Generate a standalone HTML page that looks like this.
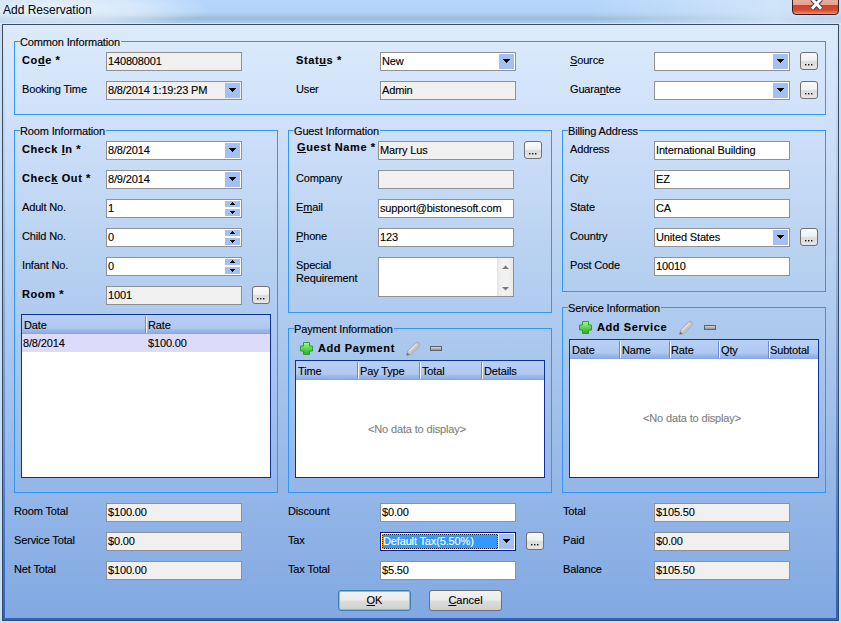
<!DOCTYPE html>
<html><head><meta charset="utf-8">
<style>
*{box-sizing:border-box}
html,body{margin:0;padding:0}
body{-webkit-text-stroke-width:0.12px;width:841px;height:623px;overflow:hidden;position:relative;background:#c9def4;font-family:"Liberation Sans",sans-serif}
.a{position:absolute}
.t{position:absolute;font-size:11px;line-height:13px;letter-spacing:-0.15px;color:#000;white-space:nowrap}
.b{font-weight:bold;letter-spacing:0.6px}
.u{text-decoration:underline}
.tb{position:absolute;width:136px;height:19px;border:1px solid #8f9194;background:#fff}
.gr{background:#f0f0f0}
.tb .v{position:absolute;left:1px;top:2px;font-size:11px;line-height:13px;letter-spacing:-0.15px;white-space:nowrap}
.dd{position:absolute;right:1px;top:1px;width:15px;height:15px;background:#a2c0f1}
.dd:after{content:"";position:absolute;left:4px;top:5px;width:7px;height:4px;background:linear-gradient(#000,#000) 0 0/7px 1px no-repeat,linear-gradient(#000,#000) 1px 1px/5px 1px no-repeat,linear-gradient(#000,#000) 2px 2px/3px 1px no-repeat,linear-gradient(#000,#000) 3px 3px/1px 1px no-repeat}
.su{position:absolute;right:1px;top:1px;width:15px;height:6px;background:#a2c0f1}
.su:after{content:"";position:absolute;left:5px;top:1px;width:5px;height:3px;background:linear-gradient(#000,#000) 2px 0/1px 1px no-repeat,linear-gradient(#000,#000) 1px 1px/3px 1px no-repeat,linear-gradient(#000,#000) 0 2px/5px 1px no-repeat}
.sd{position:absolute;right:1px;top:9px;width:15px;height:7px;background:#a2c0f1}
.sd:after{content:"";position:absolute;left:5px;top:2px;width:5px;height:3px;background:linear-gradient(#000,#000) 0 0/5px 1px no-repeat,linear-gradient(#000,#000) 1px 1px/3px 1px no-repeat,linear-gradient(#000,#000) 2px 2px/1px 1px no-repeat}
.eb{position:absolute;width:18px;height:18px;border:1px solid #707070;border-radius:3px;background:linear-gradient(#fbfbfb,#f0f0f0 45%,#dcdcdc 55%,#e6e6e6)}
.eb:after{content:"";position:absolute;left:4px;top:11px;width:1px;height:1px;background:#111;box-shadow:1px 0 0 rgba(0,0,0,.35),0px 1px 0 rgba(0,0,0,.35),1px 1px 0 rgba(0,0,0,.2),3px 0 0 #111,4px 0 0 rgba(0,0,0,.35),3px 1px 0 rgba(0,0,0,.35),4px 1px 0 rgba(0,0,0,.2),6px 0 0 #111,7px 0 0 rgba(0,0,0,.35),6px 1px 0 rgba(0,0,0,.35),7px 1px 0 rgba(0,0,0,.2)}
.g{position:absolute;border:1px solid #3097f7;border-top:none}
.gt{position:absolute;left:-1px;right:-1px;top:0;height:1px;display:flex}
.gt i{display:block;height:1px;background:#3097f7}
.gt i.f{flex:1}
.gt span{position:relative;top:-5px;font-size:11px;line-height:13px;letter-spacing:-0.15px;padding:0 1px 0 0;white-space:nowrap;color:#000;height:13px}
.grid{position:absolute;border:1px solid #0d3196;background:#fff}
.gh{position:absolute;left:0;right:0;top:0;height:19px;background:linear-gradient(#b8d0f5,#afc8f1 70%,#9db9eb 78%,#91afe6 94%,#7f9fdf)}
.gc{position:absolute;top:0;height:19px}
.gs{position:absolute;top:1px;width:2px;height:17px;border-left:1px solid #6a8ad0;border-right:1px solid #eef4ff}
.nd{position:absolute;font-size:11px;line-height:13px;color:#808080;white-space:nowrap;letter-spacing:-0.15px}
.plus{position:absolute;width:14px;height:14px}
.btn{position:absolute;width:73px;height:21px;border:1px solid #707070;border-radius:3px;background:linear-gradient(#f2f2f2,#ebebeb 48%,#dddddd 52%,#cfcfcf);font-size:11px;line-height:13px;text-align:center}
</style></head><body>
<!-- title bar -->
<div class="a" style="left:0;top:0;width:841px;height:25px;background:radial-gradient(ellipse 150px 22px at 60px 9px,rgba(236,244,252,0.95),rgba(236,244,252,0.6) 55%,rgba(236,244,252,0) 100%),linear-gradient(90deg,rgba(215,232,250,0) 70%,rgba(215,232,250,0.8) 92%,rgba(215,232,250,0.5)),linear-gradient(#b6d7fb,#b2d3f7 45%,#a9c9ec 62%,#9dbad6 74%,#a3c5e8 84%,#a8cbee 90%,#e4f1fc 96%)"></div>
<div class="a" style="left:3px;top:3px;-webkit-text-stroke-width:0;font-size:12px;line-height:15px;color:#000;white-space:nowrap">Add Reservation</div>
<div class="a" style="left:792px;top:-3px;width:47px;height:18px;border:1px solid #3c1c1c;border-radius:0 0 4px 4px;background:linear-gradient(#eab4a6,#e6a090 42%,#cc4428 46%,#d24a30 75%,#e07858 92%,#e89a80)"></div>
<svg class="a" style="left:808px;top:0" width="17" height="12" viewBox="0 0 17 12"><path d="M4 -1 L13 8.6 M13 -1 L4 8.6" stroke="#33303a" stroke-width="4.8" fill="none"/><path d="M4 -1 L13 8.6 M13 -1 L4 8.6" stroke="#fff" stroke-width="3" fill="none"/></svg>

<!-- client frame -->
<div class="a" style="left:2px;top:24px;width:837px;height:597px;border:1px solid #3a4a60;background:linear-gradient(#dcebfb 0px,#cfe0fa 97px,#b9d2f1 225px,#a2c1eb 375px,#86ace4 562px,#82a8e2 595px)"></div>
<div class="a" style="left:3px;top:25px;width:2px;height:595px;background:linear-gradient(#dde9f8,#b0caee 150px,#8aaee0 275px,#5a8ad8 425px,#2a62cc 595px)"></div>
<div class="a" style="left:836px;top:25px;width:2px;height:595px;background:linear-gradient(#dde9f8,#b0caee 150px,#8aaee0 275px,#5a8ad8 425px,#2a62cc 595px)"></div>
<div class="a" style="left:3px;top:618px;width:835px;height:2px;background:#2a62cc"></div>

<!-- Common Information -->
<div class="g" style="left:14px;top:41px;width:812px;height:74px"><div class="gt"><i style="width:6px"></i><span>Common Information</span><i class="f"></i></div></div>
<div class="t b" style="left:22px;top:54px">Co<span class="u">d</span>e *</div>
<div class="t" style="left:22px;top:83px">Booking Time</div>
<div class="tb gr" style="left:106px;top:52px"><div class="v">140808001</div></div>
<div class="tb gr" style="left:106px;top:81px"><div class="v">8/8/2014 1:19:23 PM</div><div class="dd"></div></div>
<div class="t b" style="left:296px;top:54px">Stat<span class="u">u</span>s *</div>
<div class="t" style="left:296px;top:83px">User</div>
<div class="tb" style="left:380px;top:52px"><div class="v">New</div><div class="dd"></div></div>
<div class="tb gr" style="left:380px;top:81px"><div class="v">Admin</div></div>
<div class="t" style="left:570px;top:54px"><span class="u">S</span>ource</div>
<div class="t" style="left:570px;top:83px">Guara<span class="u">n</span>tee</div>
<div class="tb" style="left:654px;top:52px"><div class="dd"></div></div>
<div class="tb" style="left:654px;top:81px"><div class="dd"></div></div>
<div class="eb" style="left:800px;top:52px"></div>
<div class="eb" style="left:800px;top:81px"></div>

<!-- Room Information -->
<div class="g" style="left:14px;top:130px;width:264px;height:363px"><div class="gt"><i style="width:6px"></i><span>Room Information</span><i class="f"></i></div></div>
<div class="t b" style="left:22px;top:143px">Check <span class="u">I</span>n *</div>
<div class="t b" style="left:22px;top:172px">Chec<span class="u">k</span> Out *</div>
<div class="t" style="left:22px;top:201px">Adult No.</div>
<div class="t" style="left:22px;top:230px">Child No.</div>
<div class="t" style="left:22px;top:259px">Infant No.</div>
<div class="t b" style="left:22px;top:288px">Room *</div>
<div class="tb" style="left:106px;top:141px"><div class="v">8/8/2014</div><div class="dd"></div></div>
<div class="tb" style="left:106px;top:170px"><div class="v">8/9/2014</div><div class="dd"></div></div>
<div class="tb" style="left:106px;top:199px"><div class="v">1</div><div class="su"></div><div class="sd"></div></div>
<div class="tb" style="left:106px;top:228px"><div class="v">0</div><div class="su"></div><div class="sd"></div></div>
<div class="tb" style="left:106px;top:257px"><div class="v">0</div><div class="su"></div><div class="sd"></div></div>
<div class="tb gr" style="left:106px;top:286px"><div class="v">1001</div></div>
<div class="eb" style="left:252px;top:286px"></div>
<div class="grid" style="left:21px;top:314px;width:250px;height:164px">
 <div class="gh"></div>
 <div class="gs" style="left:123px"></div>
 <div class="t" style="left:2px;top:4px">Date</div>
 <div class="t" style="left:126px;top:4px">Rate</div>
 <div class="a" style="left:0;top:19px;width:248px;height:18px;background:#dcdcfa"></div>
 <div class="t" style="left:1px;top:22px">8/8/2014</div>
 <div class="t" style="left:126px;top:22px">$100.00</div>
</div>

<!-- Guest Information -->
<div class="g" style="left:288px;top:130px;width:264px;height:183px"><div class="gt"><i style="width:6px"></i><span>Guest Information</span><i class="f"></i></div></div>
<div class="t b" style="left:297px;top:141px"><span class="u">G</span>uest Name *</div>
<div class="t" style="left:296px;top:172px">Company</div>
<div class="t" style="left:296px;top:201px">E<span class="u">m</span>ail</div>
<div class="t" style="left:296px;top:230px"><span class="u">P</span>hone</div>
<div class="t" style="left:296px;top:259px">Special</div>
<div class="t" style="left:296px;top:272px">Requirement</div>
<div class="tb gr" style="left:378px;top:141px"><div class="v">Marry Lus</div></div>
<div class="eb" style="left:524px;top:141px"></div>
<div class="tb gr" style="left:378px;top:170px"></div>
<div class="tb" style="left:378px;top:199px"><div class="v">support@bistonesoft.com</div></div>
<div class="tb" style="left:378px;top:228px"><div class="v">123</div></div>
<div class="tb" style="left:378px;top:257px;height:40px"><div class="a" style="right:0;top:0;width:16px;height:38px;background:linear-gradient(90deg,#e6e6e6,#f1f1f1 30%,#f1f1f1 70%,#e9e9e9)"></div>
 <svg class="a" style="left:122px;top:6px" width="9" height="28" viewBox="0 0 9 28"><path d="M1 5 L4.5 1.5 L8 5 Z" fill="#7a7a7a"/><path d="M1 23 L4.5 26.5 L8 23 Z" fill="#7a7a7a"/></svg></div>

<!-- Billing Address -->
<div class="g" style="left:562px;top:130px;width:264px;height:162px"><div class="gt"><i style="width:6px"></i><span>Billing Address</span><i class="f"></i></div></div>
<div class="t" style="left:570px;top:143px">Address</div>
<div class="t" style="left:570px;top:172px">City</div>
<div class="t" style="left:570px;top:201px">State</div>
<div class="t" style="left:570px;top:230px">Country</div>
<div class="t" style="left:570px;top:259px">Post Code</div>
<div class="tb" style="left:654px;top:141px"><div class="v">International Building</div></div>
<div class="tb" style="left:654px;top:170px"><div class="v">EZ</div></div>
<div class="tb" style="left:654px;top:199px"><div class="v">CA</div></div>
<div class="tb" style="left:654px;top:228px"><div class="v">United States</div><div class="dd"></div></div>
<div class="eb" style="left:800px;top:228px"></div>
<div class="tb" style="left:654px;top:257px"><div class="v">10010</div></div>

<!-- Payment Information -->
<div class="g" style="left:288px;top:328px;width:264px;height:165px"><div class="gt"><i style="width:6px"></i><span>Payment Information</span><i class="f"></i></div></div>
<svg class="plus" style="left:300px;top:342px" viewBox="0 0 14 14"><defs><linearGradient id="pg" x1="0" y1="0" x2="0" y2="1"><stop offset="0" stop-color="#aef596"/><stop offset="0.5" stop-color="#62d452"/><stop offset="1" stop-color="#2aac2a"/></linearGradient></defs><path d="M3.5 .5h6v3.5h3v5h-3v3.5h-6v-3.5h-3v-5h3z" fill="url(#pg)" stroke="#29a02a"/></svg>
<div class="t b" style="left:318px;top:342px">Add Payment</div>
<svg class="a" style="left:405px;top:341px" width="16" height="16" viewBox="0 0 16 16"><path d="M1.5 14.5 L2.5 10 L10.5 2 Q12.5 0.5 14 2 Q15.5 3.5 14 5.5 L6 13.5 Z" fill="#c6c6c6" stroke="#a0a0a0" stroke-width="0.8"/><path d="M1.5 14.5 L2.2 11.5 L4.5 13.8 Z" fill="#707070"/><path d="M4 10.5 L11.5 3" stroke="#e2e2e2" stroke-width="1.2"/></svg>
<div class="a" style="left:430px;top:346px;width:12px;height:5px;border:1px solid #5c636b;background:linear-gradient(#d6d6d6,#b4b4b4 50%,#959595)"></div>
<div class="grid" style="left:295px;top:360px;width:250px;height:118px">
 <div class="gh"></div>
 <div class="gs" style="left:61px"></div><div class="gs" style="left:123px"></div><div class="gs" style="left:185px"></div>
 <div class="t" style="left:2px;top:4px">Time</div>
 <div class="t" style="left:64px;top:4px">Pay Type</div>
 <div class="t" style="left:126px;top:4px">Total</div>
 <div class="t" style="left:188px;top:4px">Details</div>
 <div class="nd" style="left:72px;top:62px">&lt;No data to display&gt;</div>
</div>

<!-- Service Information -->
<div class="g" style="left:562px;top:307px;width:264px;height:186px"><div class="gt"><i style="width:6px"></i><span>Service Information</span><i class="f"></i></div></div>
<svg class="plus" style="left:579px;top:321px" viewBox="0 0 14 14"><path d="M3.5 .5h6v3.5h3v5h-3v3.5h-6v-3.5h-3v-5h3z" fill="url(#pg)" stroke="#29a02a"/></svg>
<div class="t b" style="left:597px;top:321px">Add Service</div>
<svg class="a" style="left:678px;top:320px" width="16" height="16" viewBox="0 0 16 16"><path d="M1.5 14.5 L2.5 10 L10.5 2 Q12.5 0.5 14 2 Q15.5 3.5 14 5.5 L6 13.5 Z" fill="#c6c6c6" stroke="#a0a0a0" stroke-width="0.8"/><path d="M1.5 14.5 L2.2 11.5 L4.5 13.8 Z" fill="#707070"/><path d="M4 10.5 L11.5 3" stroke="#e2e2e2" stroke-width="1.2"/></svg>
<div class="a" style="left:704px;top:325px;width:12px;height:5px;border:1px solid #5c636b;background:linear-gradient(#d6d6d6,#b4b4b4 50%,#959595)"></div>
<div class="grid" style="left:569px;top:339px;width:250px;height:139px">
 <div class="gh"></div>
 <div class="gs" style="left:49px"></div><div class="gs" style="left:99px"></div><div class="gs" style="left:148px"></div><div class="gs" style="left:198px"></div>
 <div class="t" style="left:2px;top:4px">Date</div>
 <div class="t" style="left:52px;top:4px">Name</div>
 <div class="t" style="left:101px;top:4px">Rate</div>
 <div class="t" style="left:151px;top:4px">Qty</div>
 <div class="t" style="left:200px;top:4px">Subtotal</div>
 <div class="nd" style="left:73px;top:72px">&lt;No data to display&gt;</div>
</div>

<!-- Totals -->
<div class="t" style="left:14px;top:505px">Room Total</div>
<div class="t" style="left:14px;top:534px">Service Total</div>
<div class="t" style="left:14px;top:563px">Net Total</div>
<div class="tb gr" style="left:106px;top:503px"><div class="v">$100.00</div></div>
<div class="tb gr" style="left:106px;top:532px"><div class="v">$0.00</div></div>
<div class="tb gr" style="left:106px;top:561px"><div class="v">$100.00</div></div>
<div class="t" style="left:288px;top:505px">Discount</div>
<div class="t" style="left:288px;top:534px">Tax</div>
<div class="t" style="left:288px;top:563px">Tax Total</div>
<div class="tb" style="left:380px;top:503px"><div class="v">$0.00</div></div>
<div class="tb" style="left:380px;top:532px;border-color:#0a1a80"><div class="a" style="left:1px;top:1px;width:116px;height:15px;background:#3399ff;border:1px solid #222"></div><div class="a" style="left:1px;top:1px;width:116px;height:15px;border:1px dotted #ff9c00"></div><div class="v" style="left:2px;color:#fff">Default Tax(5.50%)</div><div class="dd"></div></div>
<div class="eb" style="left:526px;top:532px"></div>
<div class="tb" style="left:380px;top:561px"><div class="v">$5.50</div></div>
<div class="t" style="left:563px;top:505px">Total</div>
<div class="t" style="left:563px;top:534px">Paid</div>
<div class="t" style="left:563px;top:563px">Balance</div>
<div class="tb gr" style="left:654px;top:503px"><div class="v">$105.50</div></div>
<div class="tb gr" style="left:654px;top:532px"><div class="v">$0.00</div></div>
<div class="tb gr" style="left:654px;top:561px"><div class="v">$105.50</div></div>
<div class="btn" style="left:338px;top:590px;border-color:#3c7fb1;box-shadow:inset 0 0 0 1px #48d4f4"><span class="a" style="left:0;right:0;top:3px"><span class="u">O</span>K</span></div>
<div class="btn" style="left:429px;top:590px"><span class="a" style="left:0;right:0;top:3px"><span class="u">C</span>ancel</span></div>

</body></html>
